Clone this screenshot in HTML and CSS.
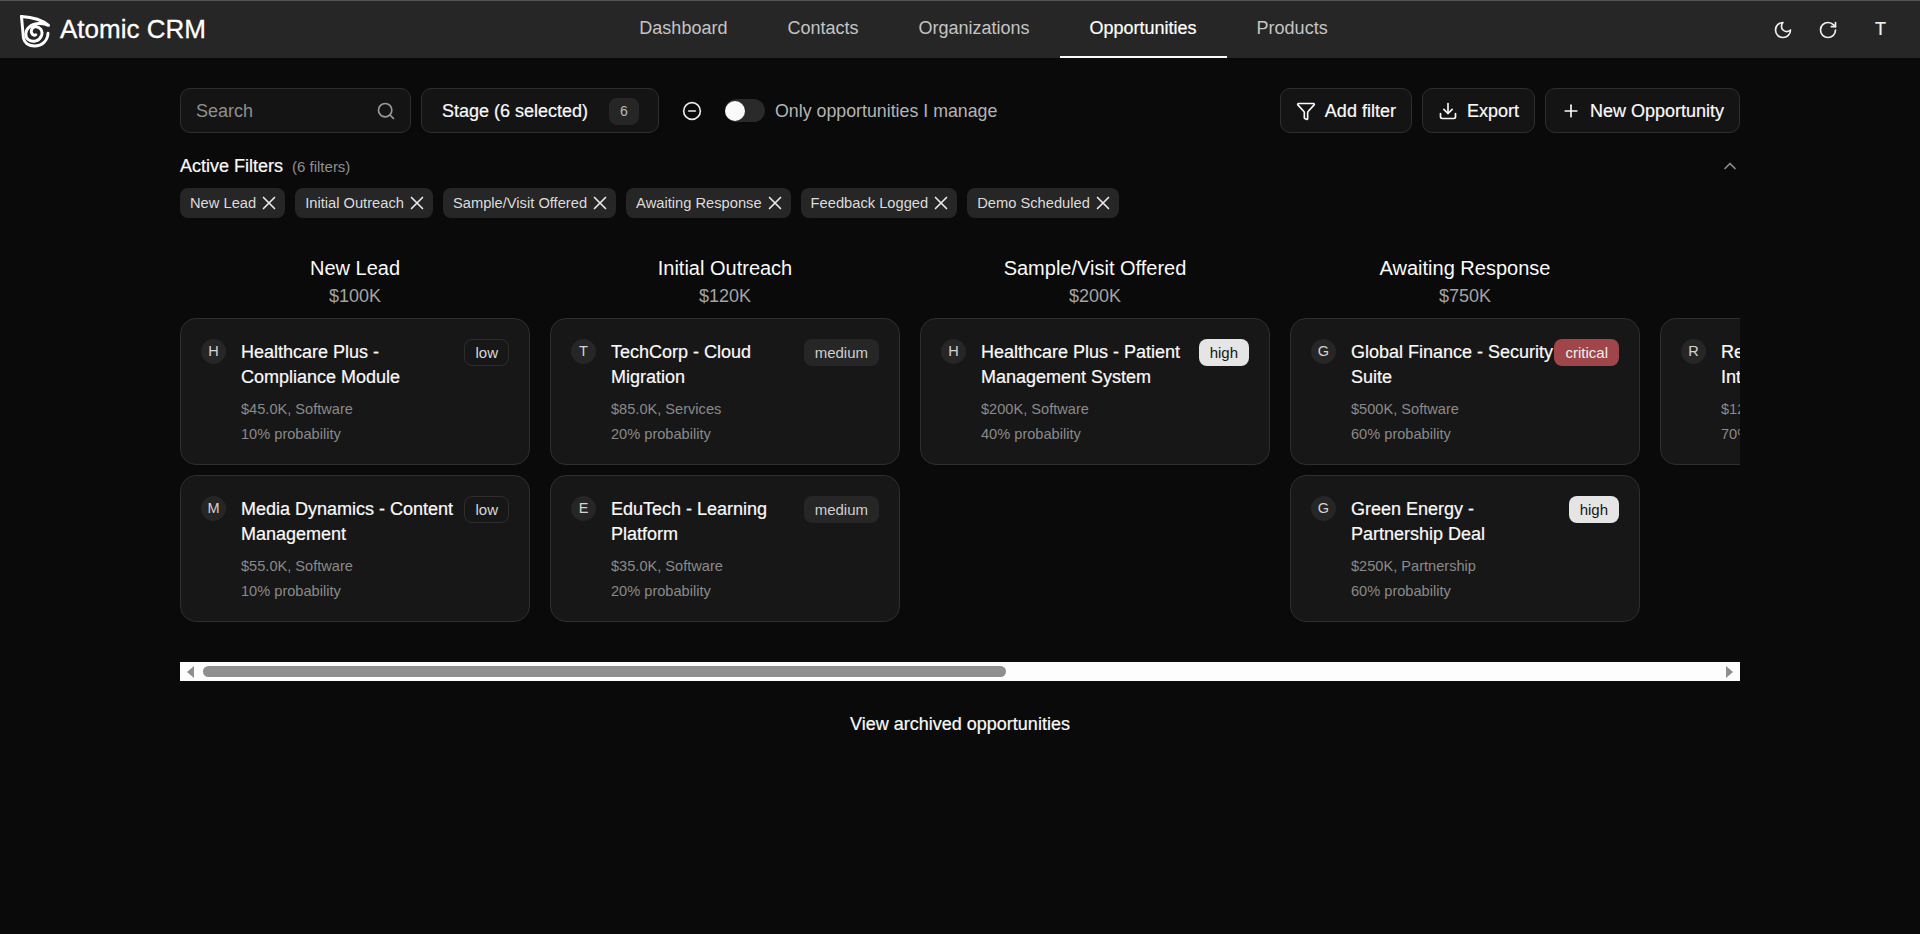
FILE: index.html
```html
<!DOCTYPE html>
<html lang="en">
<head>
<meta charset="utf-8">
<title>Atomic CRM</title>
<link rel="stylesheet" href="styles.css">
</head>
<body>
<header class="topbar">
  <a class="brand">
    <svg class="logo" viewBox="10 9.500 30.500 33.500" fill="none" stroke="#fff" stroke-width="3" stroke-linecap="round" stroke-linejoin="round"><path d="M11.500 11L13.500 33C15 39 20 41 25 41C32 41 38 36 38.500 28"/><path d="M11.500 11C20 11.500 32 14 39 20C33 17 24 17.500 19 22C15 26 15 32 18.500 34.500C23 38 30 36 32 30C33.500 25 30 21.500 26 21.500C22.500 21.500 20.500 25 22 28C23 30 25 30.500 26 29.500"/></svg>
    <span>Atomic CRM</span>
  </a>
  <nav class="tabs">
    <a class="tab">Dashboard</a>
    <a class="tab">Contacts</a>
    <a class="tab">Organizations</a>
    <a class="tab tab-active">Opportunities</a>
    <a class="tab">Products</a>
  </nav>
  <div class="top-actions">
    <svg class="icon" viewBox="0 0 24 24"><path d="M12 3a6 6 0 0 0 9 9 9 9 0 1 1-9-9Z"/></svg>
    <svg class="icon" viewBox="0 0 24 24"><path d="M21 12a9 9 0 1 1-9-9c2.520 0 4.930 1 6.740 2.740L21 8"/><path d="M21 3v5h-5"/></svg>
    <span class="user">T</span>
  </div>
</header>

<main class="page">
  <section class="toolbar">
    <div class="search"><span class="search-text">Search</span>
      <svg class="icon icon-dim" viewBox="0 0 24 24"><circle cx="11" cy="11" r="8"/><path d="m21 21-4.300-4.300"/></svg>
    </div>
    <div class="btn stage"><span>Stage (6 selected)</span><span class="count">6</span></div>
    <svg class="icon minus" viewBox="0 0 24 24"><circle cx="12" cy="12" r="10"/><path d="M8 12h8"/></svg>
    <div class="toggle"><span class="knob"></span></div>
    <span class="toggle-label">Only opportunities I manage</span>
    <div class="spacer"></div>
    <div class="btn"><svg class="icon" viewBox="0 0 24 24"><path d="M10 20a1 1 0 0 0 .55.89l2 1A1 1 0 0 0 14 21v-7a2 2 0 0 1 .52-1.340L21.740 4.670A1 1 0 0 0 21 3H3a1 1 0 0 0-.74 1.670l7.220 7.990A2 2 0 0 1 10 14z"/></svg>Add filter</div>
    <div class="btn"><svg class="icon" viewBox="0 0 24 24"><path d="M12 15V3"/><path d="M21 15v4a2 2 0 0 1-2 2H5a2 2 0 0 1-2-2v-4"/><path d="m7 10 5 5 5-5"/></svg>Export</div>
    <div class="btn"><svg class="icon" viewBox="0 0 24 24"><path d="M5 12h14"/><path d="M12 5v14"/></svg>New Opportunity</div>
  </section>

  <section class="filters-head">
    <strong>Active Filters</strong><span class="filters-count">(6 filters)</span>
    <svg class="icon chevron" viewBox="0 0 24 24"><path d="m18 15-6-6-6 6"/></svg>
  </section>
  <section class="chips">
    <span class="chip">New Lead<svg class="icon" viewBox="0 0 24 24"><path d="M18 6 6 18"/><path d="m6 6 12 12"/></svg></span>
    <span class="chip">Initial Outreach<svg class="icon" viewBox="0 0 24 24"><path d="M18 6 6 18"/><path d="m6 6 12 12"/></svg></span>
    <span class="chip">Sample/Visit Offered<svg class="icon" viewBox="0 0 24 24"><path d="M18 6 6 18"/><path d="m6 6 12 12"/></svg></span>
    <span class="chip">Awaiting Response<svg class="icon" viewBox="0 0 24 24"><path d="M18 6 6 18"/><path d="m6 6 12 12"/></svg></span>
    <span class="chip">Feedback Logged<svg class="icon" viewBox="0 0 24 24"><path d="M18 6 6 18"/><path d="m6 6 12 12"/></svg></span>
    <span class="chip">Demo Scheduled<svg class="icon" viewBox="0 0 24 24"><path d="M18 6 6 18"/><path d="m6 6 12 12"/></svg></span>
  </section>

  <section class="board">
    <div class="column">
      <div class="col-title">New Lead</div><div class="col-value">$100K</div>
      <article class="card"><span class="avatar">H</span><div class="card-body"><div class="card-top"><div class="card-name">Healthcare Plus - Compliance Module</div><span class="badge badge-low">low</span></div><div class="meta">$45.0K, Software</div><div class="meta">10% probability</div></div></article>
      <article class="card"><span class="avatar">M</span><div class="card-body"><div class="card-top"><div class="card-name">Media Dynamics - Content Management</div><span class="badge badge-low">low</span></div><div class="meta">$55.0K, Software</div><div class="meta">10% probability</div></div></article>
    </div>
    <div class="column">
      <div class="col-title">Initial Outreach</div><div class="col-value">$120K</div>
      <article class="card"><span class="avatar">T</span><div class="card-body"><div class="card-top"><div class="card-name">TechCorp - Cloud Migration</div><span class="badge badge-medium">medium</span></div><div class="meta">$85.0K, Services</div><div class="meta">20% probability</div></div></article>
      <article class="card"><span class="avatar">E</span><div class="card-body"><div class="card-top"><div class="card-name">EduTech - Learning Platform</div><span class="badge badge-medium">medium</span></div><div class="meta">$35.0K, Software</div><div class="meta">20% probability</div></div></article>
    </div>
    <div class="column">
      <div class="col-title">Sample/Visit Offered</div><div class="col-value">$200K</div>
      <article class="card"><span class="avatar">H</span><div class="card-body"><div class="card-top"><div class="card-name">Healthcare Plus - Patient Management System</div><span class="badge badge-high">high</span></div><div class="meta">$200K, Software</div><div class="meta">40% probability</div></div></article>
    </div>
    <div class="column">
      <div class="col-title">Awaiting Response</div><div class="col-value">$750K</div>
      <article class="card"><span class="avatar">G</span><div class="card-body"><div class="card-top"><div class="card-name">Global Finance - Security Suite</div><span class="badge badge-critical">critical</span></div><div class="meta">$500K, Software</div><div class="meta">60% probability</div></div></article>
      <article class="card"><span class="avatar">G</span><div class="card-body"><div class="card-top"><div class="card-name">Green Energy - Partnership Deal</div><span class="badge badge-high">high</span></div><div class="meta">$250K, Partnership</div><div class="meta">60% probability</div></div></article>
    </div>
    <div class="column">
      <div class="col-title">&nbsp;</div><div class="col-value">&nbsp;</div>
      <article class="card"><span class="avatar">R</span><div class="card-body"><div class="card-top"><div class="card-name card-name-narrow">Retail Systems Integration</div></div><div class="meta">$120K, Services</div><div class="meta">70% probability</div></div></article>
    </div>
  </section>

  <div class="scrollbar">
    <span class="arrow arrow-left"></span>
    <span class="thumb"></span>
    <span class="arrow arrow-right"></span>
  </div>

  <a class="archived">View archived opportunities</a>
</main>
</body>
</html>
```
FILE: styles.css
```css
* { box-sizing: border-box; }
html, body { margin: 0; height: 100%; }
body {
  background: #0a0a0a;
  color: #fafafa;
  font-family: "Liberation Sans", Arial, sans-serif;
  font-size: 18px;
  overflow: hidden;
}
.icon {
  width: 20px; height: 20px; flex: none;
  fill: none; stroke: currentColor; stroke-width: 2;
  stroke-linecap: round; stroke-linejoin: round;
}
.topbar {
  height: 58px;
  background: #262626;
  border-top: 1px solid #555;
  display: grid;
  grid-template-columns: 1fr auto 1fr;
  align-items: stretch;
  padding: 0 22px 0 20px;
}
.brand { display: flex; align-items: center; gap: 10px; font-size: 26px; color: #fff; -webkit-text-stroke: .3px #fff; }
.logo { width: 30px; height: 33px; margin-top: 4px; }
.tabs { display: flex; margin-left: 49px; }
.tab {
  display: flex; align-items: center; padding: 0 30px;
  color: #c4c4c4; border-bottom: 2px solid transparent;
}
.tab-active { color: #fff; border-bottom-color: #fafafa; -webkit-text-stroke: .2px #fff; }
.top-actions { display: flex; align-items: center; justify-content: flex-end; gap: 25px; color: #f0f0f0; }
.user { width: 35px; text-align: center; -webkit-text-stroke: .2px #f0f0f0; }

.page { width: 1560px; margin: 0 auto; padding-top: 30px; }
.toolbar { display: flex; align-items: center; height: 45px; gap: 10px; }
.search, .btn {
  height: 45px; border: 1px solid #2e2e2e; border-radius: 10px;
  background: #141414; display: flex; align-items: center;
}
.search { width: 231px; padding: 0 14px 0 15px; justify-content: space-between; color: #8f8f8f; }
.search-text { padding-top: 1px; }
.icon-dim { color: #999; }
.btn { padding: 1px 15px 0; gap: 9px; color: #fafafa; -webkit-text-stroke: .2px #fafafa; }
.stage { width: 238px; padding: 1px 19px 0 20px; justify-content: space-between; }
.count { width: 30px; height: 27px; border-radius: 8px; background: #262626; font-size: 14px; display: flex; align-items: center; justify-content: center; color: #bbb; -webkit-text-stroke: 0; }
.minus { margin-left: 13px; color: #e8e8e8; }
.toggle { width: 40px; height: 23px; border-radius: 12px; background: #2a2a2a; margin-left: 13px; padding: 1.500px 0; }
.knob { display: block; width: 20px; height: 20px; border-radius: 50%; background: #fafafa; }
.toggle-label { color: #b4b4b4; padding-top: 1px; font-size: 17.800px; }
.spacer { flex: 1; }

.filters-head { display: flex; align-items: center; height: 26px; margin-top: 20px; color: #fafafa; }
.filters-head strong { font-weight: 400; -webkit-text-stroke: .2px #fafafa; }
.filters-count { margin-left: 9px; font-size: 15px; color: #8f8f8f; }
.chevron { margin-left: auto; color: #8f8f8f; }
.chips { display: flex; gap: 10px; margin-top: 9px; }
.chip {
  height: 30px; padding: 0 5px 0 10px; border-radius: 8px; background: #262626;
  display: flex; align-items: center; gap: 2px; font-size: 14.700px; color: #dcdcdc;
}
.chip .icon { width: 22px; height: 22px; color: #e8e8e8; stroke-width: 1.800; }

.board { display: flex; gap: 20px; overflow: hidden; margin-top: 36px; height: 408px; align-items: flex-start; }
.column { flex: none; width: 350px; display: flex; flex-direction: column; }
.col-title { text-align: center; font-size: 20px; line-height: 29px; color: #fafafa; }
.col-value { text-align: center; line-height: 26px; color: #a3a3a3; margin-bottom: 9px; }
.card {
  height: 147px; margin-bottom: 10px; padding: 20px;
  background: #171717; border: 1px solid #2e2e2e; border-radius: 16px;
  display: flex; gap: 15px; flex: none;
}
.avatar { flex: none; width: 25px; height: 25px; border-radius: 50%; background: #262626; font-size: 14.500px; display: flex; align-items: center; justify-content: center; color: #d4d4d4; padding-bottom: 2px; }
.card-body { flex: 1; min-width: 0; }
.card-top { display: flex; justify-content: space-between; align-items: flex-start; margin-bottom: 8px; min-height: 50px; }
.card-name { line-height: 25px; color: #fafafa; width: 0; flex: 1; -webkit-text-stroke: .2px #fafafa; margin-top: 1px; margin-bottom: -1px; }
.card-name-narrow { flex: none; width: 180px; }
.meta { font-size: 14.600px; line-height: 25px; color: #8a8a8a; }
.badge { flex: none; height: 27px; padding: 0 10px; border-radius: 8px; font-size: 15px; display: flex; align-items: center; border: 1px solid transparent; }
.badge-low { border-color: #2e2e2e; color: #d8d8d8; }
.badge-medium { background: #262626; color: #cfcfcf; }
.badge-high { background: #e5e5e5; color: #171717; }
.badge-critical { background: #a0454a; color: #f0f0f0; }

.scrollbar { height: 19px; background: #fdfdfd; display: flex; align-items: center; padding: 0 7px; }
.thumb { display: block; width: 803px; height: 11px; border-radius: 6px; background: #8f8f8f; margin-left: 9px; }
.arrow { width: 0; height: 0; border-top: 6.500px solid transparent; border-bottom: 6.500px solid transparent; }
.arrow-left { border-right: 7px solid #8f8f8f; }
.arrow-right { border-left: 7px solid #8f8f8f; margin-left: auto; }
.archived { display: block; text-align: center; margin-top: 33px; line-height: 20px; color: #fafafa; -webkit-text-stroke: .2px #fafafa; }
```
